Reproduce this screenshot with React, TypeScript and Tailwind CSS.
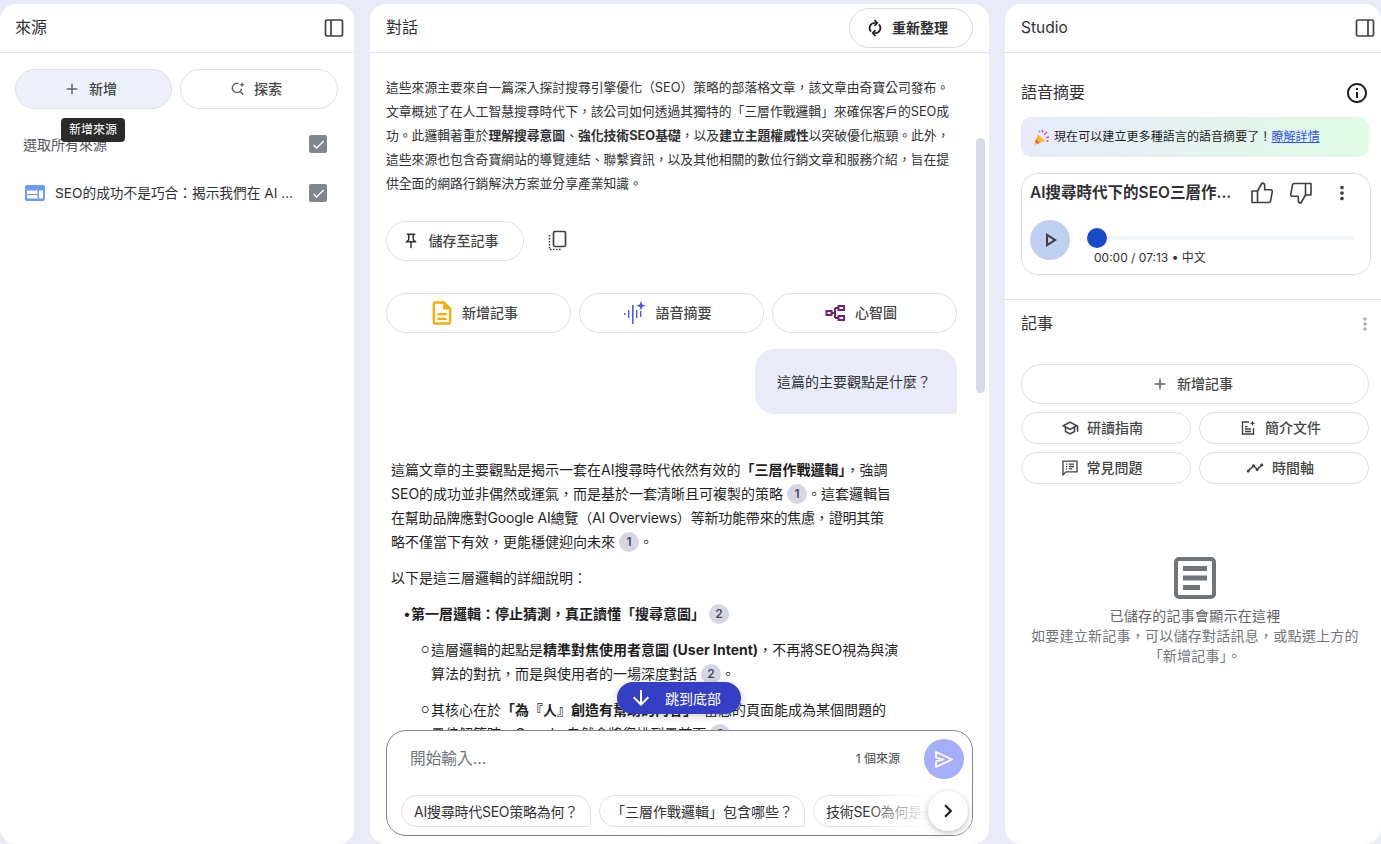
import type { ReactNode } from "react";
import {
  MdAdd,
  MdArrowDownward,
  MdChevronRight,
  MdCheck,
  MdMoreVert,
  MdOutlineDescription,
  MdOutlineInfo,
  MdOutlinePlayArrow,
  MdOutlinePushPin,
  MdOutlineSchool,
  MdTimeline,
} from "react-icons/md";

const font = "font-['Inter','Noto_Sans_CJK_TC',sans-serif]";

const PanelIcon = ({ side }: { side: "left" | "right" }) => (
  <svg width="20" height="20" viewBox="0 0 20 20" fill="none" stroke="#3c4043" strokeWidth="1.7">
    <rect x="1.5" y="2" width="17" height="16" rx="1.5" />
    <path d={side === "left" ? "M7 2v16" : "M13 2v16"} />
  </svg>
);

const SearchSpark = () => (
  <svg width="16" height="16" viewBox="0 0 16 16" fill="none" stroke="#5f6368" strokeWidth="1.4">
    <path d="M8.5 2.6a4.6 4.6 0 1 0 3 5" />
    <path d="M9.7 10l3.6 3.8" />
    <path d="M12 .8l.8 2.1 2.1.8-2.1.8-.8 2.1-.8-2.1-2.1-.8 2.1-.8z" fill="#5f6368" stroke="none" />
  </svg>
);

const CopyIcon = () => (
  <svg width="20" height="22" viewBox="0 0 20 22" fill="none" stroke="#3c4043">
    <rect x="5.5" y="1.5" width="12" height="15" rx="1.5" strokeWidth="1.7" />
    <path d="M1.5 5v14.5H13" strokeWidth="1.6" strokeDasharray="1.6 1.4" />
  </svg>
);

const AudioSpark = () => (
  <svg width="24" height="24" viewBox="0 0 24 24" fill="#4a5cf0">
    <rect x="1" y="12" width="1.4" height="2" />
    <rect x="5" y="9" width="1.4" height="8" />
    <rect x="9" y="4" width="1.6" height="19" />
    <rect x="13" y="9" width="1.4" height="8" />
    <rect x="17" y="10" width="1.4" height="6" />
    <path d="M18 0l1.3 3.4 3.4 1.3-3.4 1.3-1.3 3.4-1.3-3.4-3.4-1.3 3.4-1.3z" />
  </svg>
);

const MindMap = () => (
  <svg width="21" height="18" viewBox="0 0 20 18" fill="none" stroke="#77206f" strokeWidth="2">
    <rect x="1" y="7" width="5" height="4" />
    <rect x="13" y="2" width="5.5" height="4" />
    <rect x="13" y="12" width="5.5" height="4" />
    <path d="M6 9h3.5M9.5 4v10M9.5 4H13M9.5 14H13" />
  </svg>
);

const WebIcon = () => (
  <svg width="20" height="16" viewBox="0 0 20 16">
    <rect width="20" height="16" rx="2" fill="#6c9bf5" />
    <rect x="2" y="5.5" width="10.5" height="3.5" fill="#fff" />
    <rect x="2" y="10" width="10.5" height="3.5" fill="#fff" />
    <rect x="14" y="5.5" width="4" height="8" fill="#fff" />
  </svg>
);

const BriefIcon = () => (
  <svg width="16" height="16" viewBox="0 0 16 16" fill="none" stroke="#3c4043" strokeWidth="1.4">
    <path d="M9 2H2.5v12h11V8" />
    <path d="M5 6.5h2.5M5 9h6M5 11.5h6" />
    <path d="M12.5 .5l.8 2 2 .8-2 .8-.8 2-.8-2-2-.8 2-.8z" fill="#3c4043" stroke="none" />
  </svg>
);

const FaqIcon = () => (
  <svg width="16" height="16" viewBox="0 0 16 16" fill="none" stroke="#3c4043" strokeWidth="1.3">
    <path d="M1 1.2h14v10.6H4L1 14.8z" />
    <path d="M4 4.2h1.2M4 6.5h1.2M4 8.8h1.2M6.8 4.2H12M6.8 6.5H12M6.8 8.8H10" />
  </svg>
);

const ThumbUp = ({ flip }: { flip?: boolean }) => (
  <svg
    width="24"
    height="24"
    viewBox="0 0 24 24"
    fill="none"
    stroke="#3c4043"
    strokeWidth="1.6"
    strokeLinejoin="round"
    className={flip ? "rotate-180" : ""}
  >
    <path d="M7.5 10v11.5H2V10z" />
    <path d="M7.5 10l4.6-8c1.6 0 2.6 1 2.6 2.6V8.8h6a1.6 1.6 0 0 1 1.6 1.9l-1.8 9.4a1.7 1.7 0 0 1-1.7 1.4H7.5" />
  </svg>
);

const SendIcon = () => (
  <svg width="18" height="17" viewBox="0 0 18 17" fill="none" stroke="#fff" strokeWidth="1.8" strokeLinejoin="round">
    <path d="M1 1l16 7.5L1 16v-5.6l7.5-1.9L1 6.6z" />
  </svg>
);

const NoteIcon = () => (
  <svg width="42" height="42" viewBox="0 0 42 42" fill="#70757a">
    <rect x="2" y="2" width="38" height="38" rx="3" fill="none" stroke="#70757a" strokeWidth="4" />
    <rect x="9" y="9" width="24" height="5" />
    <rect x="9" y="18.5" width="24" height="5" />
    <rect x="9" y="28" width="17" height="5" />
  </svg>
);

const Party = () => (
  <svg width="17" height="17" viewBox="0 0 17 17">
    <path d="M1 16l4-11 7 7z" fill="#f5b82e" />
    <path d="M3 10.5l3.5 3.5-2 .8-2.3-2.3z" fill="#e2574c" />
    <path d="M9 1l1 2.5M14 3l-3 3M16 8l-3 .6" stroke="#c2589a" strokeWidth="1.4" fill="none" />
    <circle cx="6.5" cy="2.5" r="1" fill="#6c9bf5" />
    <circle cx="14.5" cy="12" r="1" fill="#e2574c" />
  </svg>
);

const Refresh = () => (
  <svg width="18" height="18" viewBox="0 0 18 18" fill="none" stroke="#1f1f1f" strokeWidth="1.7">
    <path d="M10.5 4H8.5a5 5 0 0 0-3.4 8.6" />
    <path d="M8.5 1.2L11.2 4 8.5 6.8" />
    <path d="M7.5 14h2a5 5 0 0 0 3.4-8.6" />
    <path d="M9.5 11.2L6.8 14l2.7 2.8" />
  </svg>
);

const Check = () => (
  <span className="w-[18px] h-[18px] rounded-[2px] bg-[#80868b] flex items-center justify-center">
    <MdCheck size={15} color="#fff" />
  </span>
);

const Cite = ({ n }: { n: number }) => (
  <span className="inline-flex items-center justify-center w-5 h-5 ml-1 rounded-full bg-[#d5d6e2] text-[12px] font-semibold text-[#4a4d5a] align-[1px] leading-none">
    {n}
  </span>
);

const Pill = ({ className, children }: { className: string; children: ReactNode }) => (
  <div
    className={`flex items-center justify-center rounded-full border border-[#dde0ec] pb-px text-[14px] font-medium text-[#444746] ${className}`}
  >
    {children}
  </div>
);

const Sources = () => (
  <section className="relative w-[354px] h-full shrink-0 bg-white rounded-[16px] flex flex-col">
    <div className="h-[49px] shrink-0 flex items-center justify-between border-b border-[#e0e3ee] pl-[15px] pr-[10px]">
      <span className="text-[16px] text-[#303134] pb-[2px]">來源</span>
      <PanelIcon side="left" />
    </div>
    <div className="flex gap-2 pl-[15px] pr-4 pt-4">
      <Pill className="w-[157px] h-10 gap-2 pr-[7px] bg-[#edf0fa] border-[#c9d0e8]">
        <MdAdd size={18} color="#5f6368" />
        新增
      </Pill>
      <Pill className="w-[158px] h-10 gap-2 pr-[6px]">
        <SearchSpark />
        探索
      </Pill>
    </div>
    <div className="flex items-center justify-between pl-[23px] pr-[27px] mt-[25px] h-[20px]">
      <span className="text-[14px] text-[#55585c]">選取所有來源</span>
      <Check />
    </div>
    <div className="flex items-center pl-[25px] pr-[27px] mt-[29px] h-[20px]">
      <WebIcon />
      <span className="ml-[10px] flex-1 text-[13.7px] text-[#303134] whitespace-nowrap">
        SEO的成功不是巧合：揭示我們在 AI ...
      </span>
      <Check />
    </div>
    <div className="absolute left-[61px] top-[114px] h-6 px-2 flex items-center rounded bg-[#2b2b2b] text-white text-[12px]">
      新增來源
    </div>
  </section>
);

const Chat = () => (
  <section className="relative w-[619px] h-full shrink-0 bg-white rounded-[16px] flex flex-col overflow-hidden">
    <div className="h-[49px] shrink-0 flex items-center justify-between border-b border-[#e0e3ee] pl-4 pr-4">
      <span className="text-[16px] text-[#303134] pb-[2px]">對話</span>
      <div className="w-[124px] h-10 flex items-center justify-center gap-2 pr-2 pb-px rounded-full border border-[#d5d8e4] text-[14px] font-semibold text-[#303134]">
        <Refresh />
        重新整理
      </div>
    </div>
    <div className="flex-1 overflow-hidden pl-4 pr-4 pt-[23px]">
      <div className="text-[12.8px] leading-6 text-[#303134] whitespace-nowrap">
        <div>這些來源主要來自一篇深入探討搜尋引擎優化（SEO）策略的部落格文章，該文章由奇寶公司發布。</div>
        <div>文章概述了在人工智慧搜尋時代下，該公司如何透過其獨特的「三層作戰邏輯」來確保客戶的SEO成</div>
        <div>
          功。此邏輯著重於<b>理解搜尋意圖</b>、<b>強化技術SEO基礎</b>，以及<b>建立主題權威性</b>以突破優化瓶頸。此外，
        </div>
        <div>這些來源也包含奇寶網站的導覽連結、聯繫資訊，以及其他相關的數位行銷文章和服務介紹，旨在提</div>
        <div>供全面的網路行銷解決方案並分享產業知識。</div>
      </div>
      <div className="flex items-center mt-[25px]">
        <Pill className="w-[138px] h-10 gap-[9px] pr-[10px]">
          <MdOutlinePushPin size={18} color="#303134" />
          儲存至記事
        </Pill>
        <span className="ml-6">
          <CopyIcon />
        </span>
      </div>
      <div className="flex gap-2 mt-8 w-[571px]">
        <Pill className="w-[185px] shrink-0 h-10 gap-[6px] pr-[11px] rounded-[16px]">
          <MdOutlineDescription size={28} color="#f9ab00" />
          新增記事
        </Pill>
        <Pill className="w-[185px] shrink-0 h-10 gap-[9px] pr-[9px] rounded-[16px]">
          <AudioSpark />
          語音摘要
        </Pill>
        <Pill className="w-[185px] shrink-0 h-10 gap-[9px] pr-[7px] rounded-[16px]">
          <MindMap />
          心智圖
        </Pill>
      </div>
      <div className="w-[571px] flex justify-end mt-4">
        <div className="w-[202px] h-[65px] pl-[22px] pb-px flex items-center bg-[#e9ebf8] rounded-[20px] rounded-br-none text-[14px] text-[#303134]">
          這篇的主要觀點是什麼？
        </div>
      </div>
      <div className="pl-[5px] pt-11 text-[14px] leading-6 text-[#1f1f1f] whitespace-nowrap">
        <div>
          這篇文章的主要觀點是揭示一套在AI搜尋時代依然有效的<b>「三層作戰邏輯」</b>，強調
        </div>
        <div>
          SEO的成功並非偶然或運氣，而是基於一套清晰且可複製的策略
          <Cite n={1} />
          。這套邏輯旨
        </div>
        <div className="tracking-[-0.2px]">在幫助品牌應對Google AI總覽（AI Overviews）等新功能帶來的焦慮，證明其策</div>
        <div>
          略不僅當下有效，更能穩健迎向未來
          <Cite n={1} />。
        </div>
        <div className="mt-3">以下是這三層邏輯的詳細說明：</div>
        <div className="mt-3 pl-3 flex">
          <span className="w-2">•</span>
          <span>
            <b>第一層邏輯：停止猜測，真正讀懂「搜尋意圖」</b>
            <Cite n={2} />
          </span>
        </div>
        <div className="mt-3 pl-[30px] flex">
          <span className="w-[10px] text-[9px]">○</span>
          <span>
            這層邏輯的起點是<b>精準對焦使用者意圖 (User Intent)</b>，不再將SEO視為與演
            <br />
            算法的對抗，而是與使用者的一場深度對話
            <Cite n={2} />。
          </span>
        </div>
        <div className="mt-3 pl-[30px] flex">
          <span className="w-[10px] text-[9px]">○</span>
          <span>
            其核心在於<b>「為『人』創造有幫助的內容」</b>，當您的頁面能成為某個問題的
            <br />
            最佳解答時，Google 自然會將您排到最前面
            <Cite n={2} />
          </span>
        </div>
      </div>
    </div>
    <div className="shrink-0 h-[114px] px-4 pb-2 bg-transparent">
      <div className="relative h-[106px] rounded-[20px] border border-[#80858f] bg-white overflow-hidden">
        <div className="flex items-center h-[56px] pl-[23px] pr-2">
          <span className="flex-1 text-[15.7px] text-[#70757a]">開始輸入...</span>
          <span className="text-[12px] text-[#444746] mr-6">1 個來源</span>
          <span className="w-10 h-10 rounded-full bg-[#a4aefb] flex items-center justify-center">
            <SendIcon />
          </span>
        </div>
        <div className="flex gap-2 pl-[14px] mt-2 whitespace-nowrap text-[14px] text-[#303134]">
          <span className="w-[190px] h-8 shrink-0 flex items-center justify-center tracking-[-0.25px] rounded-[16px] rounded-br-[3px] border border-[#dde0ec]">
            AI搜尋時代SEO策略為何？
          </span>
          <span className="w-[206px] h-8 shrink-0 flex items-center justify-center rounded-[16px] rounded-br-[3px] border border-[#dde0ec]">
            「三層作戰邏輯」包含哪些？
          </span>
          <span className="h-8 px-3 flex items-center tracking-[-0.25px] rounded-[16px] rounded-br-[3px] border border-[#dde0ec]">
            技術SEO為何是基礎？
          </span>
        </div>
        <div className="absolute right-0 bottom-0 w-[110px] h-[50px] bg-gradient-to-r from-transparent to-white to-60%" />
        <span className="absolute right-1 bottom-1 w-10 h-10 rounded-full bg-white shadow-[0_2px_6px_rgba(0,0,0,0.25)] flex items-center justify-center">
          <MdChevronRight size={26} color="#1f1f1f" />
        </span>
      </div>
    </div>
    <div className="absolute left-[606px] top-[134px] w-[9px] h-[255px] rounded-full bg-[#d8dbe7]" />
    <div className="absolute left-[247px] top-[678px] w-[124px] h-8 rounded-full bg-[#353fc5] text-white text-[14px] flex items-center pl-3 gap-3 shadow-[0_2px_8px_rgba(0,0,0,0.2)]">
      <MdArrowDownward size={24} />
      跳到底部
    </div>
  </section>
);

const Studio = () => (
  <section className="w-[376px] h-full shrink-0 bg-white rounded-[16px] flex flex-col">
    <div className="h-[49px] shrink-0 flex items-center justify-between border-b border-[#e0e3ee] pl-4 pr-[6px]">
      <span className="text-[15.5px] text-[#303134]">Studio</span>
      <PanelIcon side="right" />
    </div>
    <div className="px-4 pt-[27px]">
      <div className="flex items-center justify-between h-6">
        <span className="text-[16px] text-[#303134]">語音摘要</span>
        <MdOutlineInfo size={24} color="#1f1f1f" className="-mr-1 mt-[2px]" />
      </div>
      <div className="mt-[13px] h-10 w-[348px] rounded-[10px] bg-gradient-to-r from-[#e8eafa] to-[#e0fbe5] flex items-center pl-3 gap-[4px] text-[12px] tracking-[0.08px] text-[#1f1f1f]">
        <Party />
        <span>
          現在可以建立更多種語言的語音摘要了！<span className="text-[#3556e8] underline">瞭解詳情</span>
        </span>
      </div>
      <div className="mt-4 w-[350px] h-[102px] rounded-[16px] border border-[#d8dbe7] pl-2 pr-4 pt-[7px]">
        <div className="flex items-center h-6">
          <span className="w-[206px] text-[15.5px] font-semibold text-[#303134] whitespace-nowrap">
            AI搜尋時代下的SEO三層作...
          </span>
          <span className="ml-[14px]">
            <ThumbUp />
          </span>
          <span className="ml-[15px]">
            <ThumbUp flip />
          </span>
          <MdMoreVert size={22} color="#3c4043" className="ml-[18px]" />
        </div>
        <div className="flex items-start mt-[15px]">
          <span className="w-10 h-10 rounded-full bg-[#bfcff0] flex items-center justify-center shrink-0">
            <MdOutlinePlayArrow size={24} color="#3c4043" />
          </span>
          <div className="ml-[17px] w-[267px] pt-2">
            <div className="relative h-5 flex items-center">
              <div className="h-1 w-full rounded-full bg-[#f0f4fb]" />
              <span className="absolute left-0 top-0 w-5 h-5 rounded-full bg-[#174ac6]" />
            </div>
            <div className="ml-[7px] mt-[1px] text-[12px] text-[#303134] whitespace-nowrap">
              00:00 / 07:13 • 中文
            </div>
          </div>
        </div>
      </div>
    </div>
    <div className="mt-6 border-t border-[#e0e3ee] px-4 pt-[13px]">
      <div className="flex items-center justify-between h-5">
        <span className="text-[16px] text-[#303134]">記事</span>
        <MdMoreVert size={20} color="#aaadb3" className="-mr-[10px] mt-[2px]" />
      </div>
      <div className="w-[348px] mt-[31px] flex flex-col gap-2">
        <Pill className="h-10 gap-2 pr-[6px]">
          <MdAdd size={18} color="#5f6368" />
          新增記事
        </Pill>
        <div className="grid grid-cols-2 gap-2">
          <Pill className="h-8 gap-2 pr-2">
            <MdOutlineSchool size={18} color="#3c4043" />
            研讀指南
          </Pill>
          <Pill className="h-8 gap-[9px] pr-[7px]">
            <BriefIcon />
            簡介文件
          </Pill>
          <Pill className="h-8 gap-[9px] pr-2">
            <FaqIcon />
            常見問題
          </Pill>
          <Pill className="h-8 gap-2 pr-2">
            <MdTimeline size={18} color="#3c4043" />
            時間軸
          </Pill>
        </div>
      </div>
    </div>
    <div className="mt-[73px] pl-1 flex flex-col items-center text-center text-[14px] leading-5 tracking-[0.25px] text-[#70757a]">
      <NoteIcon />
      <div className="mt-[7px] text-[#5f6368]">已儲存的記事會顯示在這裡</div>
      <div>如要建立新記事，可以儲存對話訊息，或點選上方的</div>
      <div>「新增記事」。</div>
    </div>
  </section>
);

export default function App() {
  return (
    <div className={`w-[1381px] h-[844px] overflow-hidden bg-[#e9ebf8] pt-1 flex gap-4 ${font}`}>
      <Sources />
      <Chat />
      <Studio />
    </div>
  );
}
